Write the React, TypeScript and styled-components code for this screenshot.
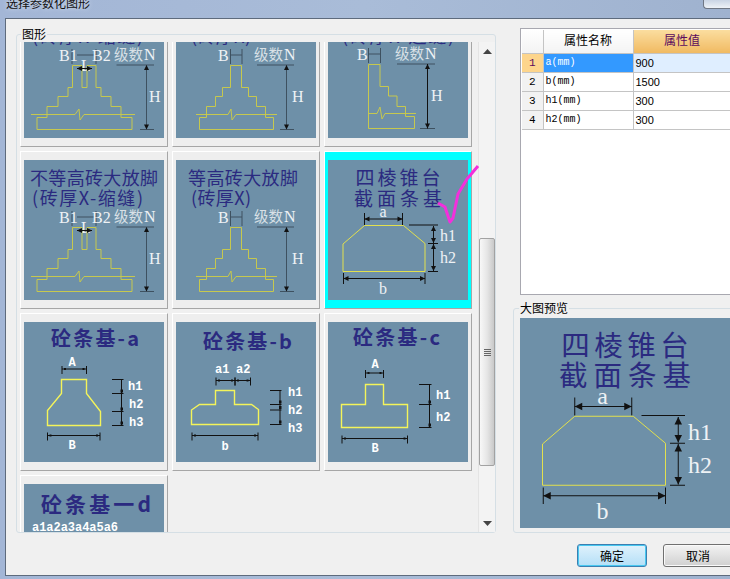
import React from 'react'
import styled, { createGlobalStyle } from 'styled-components'

const GlobalStyle = createGlobalStyle`
    html, body {
        margin: 0;
        padding: 0;
        width: 730px;
        height: 579px;
        overflow: hidden;
        font-family: "Noto Sans CJK SC", "Liberation Sans", sans-serif;
    }
`

const Frame = styled.div`
    width: 730px;
    height: 579px;
    overflow: hidden;
    background: linear-gradient(to right, #a3b6d6, #a9bcd8 50%, #9fb2cf);
`

const TitleBar = styled.div`
    height: 18px;
    display: flex;
    justify-content: space-between;
    align-items: flex-start;
    overflow: hidden;
`

const TitleText = styled.span`
    margin: -5px 0 0 6px;
    font-size: 12px;
    line-height: 16px;
    color: #111;
    text-shadow: 0 0 4px #dde6f2;
`

const CloseButton = styled.div`
    box-sizing: border-box;
    width: 27px;
    height: 9px;
    border: 1px solid #6f7784;
    border-top: 0;
    border-right: 0;
    border-radius: 0 0 0 4px;
    background: linear-gradient(#c9d4e4, #eef2f7);
`

const Client = styled.div`
    box-sizing: border-box;
    width: 760px;
    height: 558px;
    margin-left: 5px;
    border: 1px solid #5e6b7d;
    background: #f0f0f0;
`

const Body = styled.div`
    display: flex;
    height: 514px;
`

const ShapesGroup = styled.section`
    position: relative;
    box-sizing: border-box;
    flex: none;
    display: flex;
    width: 480px;
    height: 499px;
    margin: 15px 0 0 10px;
    padding-top: 7px;
    border: 1px solid #d5dfe5;
    border-radius: 3px;
`

const GroupLabel = styled.span<{ $left: number }>`
    position: absolute;
    top: -8px;
    left: ${p => p.$left}px;
    padding: 0 1px;
    font-size: 12px;
    line-height: 14px;
    color: #000;
    background: #f0f0f0;
`

const Viewport = styled.div`
    flex: none;
    width: 461px;
    height: 490px;
    overflow: hidden;
`

const ShapeGrid = styled.div`
    display: grid;
    grid-template-columns: repeat(3, 148px);
    grid-auto-rows: 158px;
    gap: 4px;
    margin-top: -53px;
    padding-left: 3px;
`

const Cell = styled.div<{ $selected?: boolean }>`
    box-sizing: border-box;
    padding: 8px 3px;
    border: 1px solid;
    border-color: #fff #a6a6a6 #a6a6a6 #fff;
    background: ${p => (p.$selected ? '#00ffff' : '#eeeeee')};
`

const Scrollbar = styled.div`
    flex: none;
    box-sizing: border-box;
    display: flex;
    flex-direction: column;
    width: 17px;
    height: 490px;
    border-left: 1px solid #e4e4e4;
    background: #f3f3f3;
`

const ScrollButton = styled.div`
    flex: none;
    display: flex;
    justify-content: center;
    align-items: center;
    height: 18px;
`

const ScrollThumb = styled.div`
    flex: none;
    box-sizing: border-box;
    display: flex;
    justify-content: center;
    align-items: center;
    height: 228px;
    margin-top: 178px;
    border: 1px solid #a2a2a2;
    border-radius: 2px;
    background: linear-gradient(to right, #f8f8f8, #e6e6e6 50%, #c9c9c9);
`

const ScrollSpacer = styled.div`
    flex: 1;
`

const Grip = styled.div`
    width: 7px;
    height: 7px;
    background: repeating-linear-gradient(#666 0 1px, transparent 1px 2px);
`

const CheckMark = styled.svg`
    position: absolute;
    left: 420px;
    top: 129px;
    width: 44px;
    height: 62px;
`

const SideColumn = styled.div`
    flex: none;
    width: 230px;
    margin-left: 17px;
    padding-top: 9px;
`

const TableBox = styled.div`
    box-sizing: border-box;
    height: 267px;
    margin-left: 7px;
    padding: 1px 0 0 1px;
    border: 1px solid #a8a8b0;
    background: #fff;
`

const PropTable = styled.table`
    table-layout: fixed;
    width: 209px;
    border-collapse: collapse;
`

const HeadCell = styled.th<{ $active?: boolean }>`
    height: 23px;
    padding: 0 0 3px;
    box-sizing: border-box;
    border-right: 1px solid #c4c4c4;
    border-bottom: 1px solid #c4c4c4;
    font-size: 12px;
    font-weight: 400;
    color: ${p => (p.$active ? '#5a0a5e' : '#000')};
    background: ${p => (p.$active ? 'linear-gradient(#fbdd9f, #f0ba62)' : 'linear-gradient(#fff, #f3f3f3)')};
`

const RowHead = styled.td<{ $active?: boolean }>`
    height: 18px;
    padding: 0;
    border-right: 1px solid #c4c4c4;
    border-bottom: 1px solid #c4c4c4;
    font-family: "Liberation Mono", monospace;
    font-size: 11px;
    line-height: 14px;
    text-align: center;
    color: ${p => (p.$active ? '#5a0a5e' : '#000')};
    background: ${p => (p.$active ? '#fdd58c' : '#f2f2f2')};
`

const NameCell = styled.td<{ $active?: boolean }>`
    padding: 0 0 0 2px;
    border-right: 1px solid #c4c4c4;
    border-bottom: 1px solid #c4c4c4;
    font-family: "Liberation Mono", monospace;
    font-size: 10px;
    line-height: 14px;
    color: ${p => (p.$active ? '#fff' : '#000')};
    background: ${p => (p.$active ? '#3399ff' : '#fff')};
`

const ValueCell = styled.td<{ $active?: boolean }>`
    padding: 0 0 0 2px;
    border-bottom: 1px solid #c4c4c4;
    font-family: "Liberation Sans", sans-serif;
    font-size: 11px;
    line-height: 14px;
    color: #000;
    background: ${p => (p.$active ? '#dfeeff' : '#fff')};
`

const PreviewGroup = styled.section`
    position: relative;
    box-sizing: border-box;
    height: 225px;
    margin-top: 13px;
    padding: 9px 0 0 6px;
    border: 1px solid #d5dfe5;
    border-radius: 3px;
`

const Footer = styled.div`
    display: flex;
    gap: 16px;
    margin-top: 11px;
    padding-left: 571px;
`

const DialogButton = styled.button<{ $primary?: boolean }>`
    box-sizing: border-box;
    width: 70px;
    height: 23px;
    padding: 0;
    border: 1px solid ${p => (p.$primary ? '#3c7fb1' : '#707070')};
    border-radius: 3px;
    font-family: inherit;
    font-size: 12px;
    color: #000;
    background: ${p => (p.$primary ? 'linear-gradient(#e0f2fc, #b4dff7)' : 'linear-gradient(#f3f3f3, #d0d0d0)')};
    box-shadow: ${p => (p.$primary ? 'inset 0 0 0 1px #48c8f0' : 'inset 0 0 0 1px #fafafa')};
`

// drawings
const Plate = styled.svg<{ $size: number }>`
    display: block;
    flex: none;
    width: ${p => p.$size}px;
    height: ${p => p.$size}px;
    background: #6e90a8;
`

const Heading = styled.text<{ $bold?: boolean; $size?: number }>`
    font-family: "Noto Sans CJK SC", sans-serif;
    font-size: ${p => p.$size ?? 18}px;
    font-weight: ${p => (p.$bold ? 700 : 400)};
    fill: #2b2a80;
`

const SerifMark = styled.text`
    font-family: "Liberation Serif", serif;
    font-size: 16px;
    fill: #eef2f5;
`

const CjkMark = styled.text`
    font-family: "Noto Sans CJK SC", sans-serif;
    font-size: 14.5px;
    fill: #d8e0e6;
`

const BoldMark = styled.text`
    font-family: "Liberation Mono", monospace;
    font-size: 12px;
    font-weight: 700;
    fill: #fff;
`

const Outline = styled.polygon<{ $tone?: 'brick' | 'taper' | 'concrete' }>`
    fill: none;
    stroke: ${p => (p.$tone === 'concrete' ? '#f4f45a' : p.$tone === 'taper' ? '#e2e04e' : '#c6c84e')};
    stroke-width: ${p => (p.$tone === 'concrete' ? 1.4 : 1)};
    vector-effect: non-scaling-stroke;
`

const Ground = styled.polyline`
    fill: none;
    stroke: #c6c84e;
    stroke-width: 1;
    vector-effect: non-scaling-stroke;
`

const Rule = styled.line<{ $soft?: boolean }>`
    stroke: ${p => (p.$soft ? '#3e5160' : '#111')};
    stroke-width: 1;
    vector-effect: non-scaling-stroke;
`

const VDim = ({ x, y1, y2, soft }: { x: number; y1: number; y2: number; soft?: boolean }) => (
    <g>
        <Rule $soft={soft} x1={x} y1={y1} x2={x} y2={y2} />
        <polygon points={`${x},${y1} ${x - 2.5},${y1 + 5} ${x + 2.5},${y1 + 5}`} fill="#111" />
        <polygon points={`${x},${y2} ${x - 2.5},${y2 - 5} ${x + 2.5},${y2 - 5}`} fill="#111" />
    </g>
)

const HDim = ({ y, x1, x2 }: { y: number; x1: number; x2: number }) => (
    <g>
        <Rule x1={x1} y1={y} x2={x2} y2={y} />
        <polygon points={`${x1},${y} ${x1 + 5},${y - 2.5} ${x1 + 5},${y + 2.5}`} fill="#111" />
        <polygon points={`${x2},${y} ${x2 - 5},${y - 2.5} ${x2 - 5},${y + 2.5}`} fill="#111" />
    </g>
)

const SmallHDim = ({ y, x1, x2 }: { y: number; x1: number; x2: number }) => (
    <g>
        <Rule x1={x1} y1={y - 3} x2={x1} y2={y + 5} />
        <Rule x1={x2} y1={y - 3} x2={x2} y2={y + 5} />
        <Rule x1={x1} y1={y} x2={x2} y2={y} />
        <rect x={x1 + 2} y={y - 1} width={2} height={2} fill="#111" />
        <rect x={x2 - 4} y={y - 1} width={2} height={2} fill="#111" />
    </g>
)

const TickStack = ({ x1, x2, stem, ys }: { x1: number; x2: number; stem: number; ys: number[] }) => (
    <g>
        {ys.map(y => (
            <Rule key={y} x1={x1} y1={y} x2={x2} y2={y} />
        ))}
        <Rule x1={stem} y1={ys[0]} x2={stem} y2={ys[ys.length - 1]} />
        {ys.slice(1).map(y => (
            <rect key={y} x={stem - 1} y={y - 4} width={2.5} height={3} fill="#111" />
        ))}
    </g>
)

const BrickUnequal = () => (
    <>
        <Heading x={6} y={24.5} textLength={128}>不等高砖大放脚</Heading>
        <Heading x={8} y={45} textLength={111}>(砖厚X-缩缝)</Heading>
        <Rule $soft x1={48} y1={51} x2={48} y2={66} />
        <Rule $soft x1={72} y1={51} x2={72} y2={66} />
        <Rule $soft x1={53} y1={57} x2={72} y2={57} />
        <SerifMark x={35} y={63}>B1</SerifMark>
        <SerifMark x={68} y={63}>B2</SerifMark>
        <CjkMark x={90} y={62}>级数</CjkMark>
        <SerifMark x={120} y={62}>N</SerifMark>
        <SerifMark x={57} y={73}>L</SerifMark>
        <Outline points="48.5,67.5 58,67.5 58,89.5 63,89.5 63,67.5 72,67.5 72,89.5 77,89.5 77,98.5 87,98.5 87,108.5 97,108.5 97,119.5 108,119.5 108,131.5 13,131.5 13,119.5 23,119.5 23,108.5 34,108.5 34,98.5 44,98.5 44,89.5 48.5,89.5" />
        <Ground points="7,116.5 51,116.5 55,111 56,122 60,116.5 111,116.5" />
        <HDim y={70.5} x1={53} x2={68} />
        <Rule $soft x1={92.5} y1={67} x2={130} y2={67} />
        <Rule $soft x1={116} y1={131.5} x2={130} y2={131.5} />
        <VDim soft x={122.5} y1={67} y2={131.5} />
        <SerifMark x={125} y={104}>H</SerifMark>
    </>
)

const BrickEqual = () => (
    <>
        <Heading x={12} y={24.5} textLength={110}>等高砖大放脚</Heading>
        <Heading x={15} y={45} textLength={60}>(砖厚X)</Heading>
        <Rule $soft x1={54.5} y1={51} x2={54.5} y2={66} />
        <Rule $soft x1={66} y1={51} x2={66} y2={66} />
        <Rule $soft x1={54.5} y1={57} x2={66} y2={57} />
        <SerifMark x={42} y={63}>B</SerifMark>
        <CjkMark x={78} y={62}>级数</CjkMark>
        <SerifMark x={108} y={62}>N</SerifMark>
        <Outline points="54.5,67.5 65.5,67.5 65.5,89.5 72.5,89.5 72.5,98.5 80.5,98.5 80.5,108.5 89.5,108.5 89.5,119.5 97.5,119.5 97.5,131.5 23.5,131.5 23.5,119.5 30.5,119.5 30.5,108.5 39.5,108.5 39.5,98.5 46.5,98.5 46.5,89.5 54.5,89.5" />
        <Ground points="20,116.5 52,116.5 55,111 56,122 60,116.5 101,116.5" />
        <Rule $soft x1={81} y1={67} x2={118} y2={67} />
        <Rule $soft x1={104} y1={131.5} x2={118} y2={131.5} />
        <VDim soft x={110.5} y1={67} y2={131.5} />
        <SerifMark x={116} y={104}>H</SerifMark>
    </>
)

const BrickSide = () => (
    <>
        <Heading x={16} y={24.5} textLength={108}>等高砖大放脚</Heading>
        <Heading x={14} y={45} textLength={112}>(砖厚X-边缝)</Heading>
        <Rule $soft x1={40.5} y1={50} x2={40.5} y2={65} />
        <Rule $soft x1={52.5} y1={50} x2={52.5} y2={65} />
        <Rule $soft x1={40.5} y1={56} x2={52.5} y2={56} />
        <SerifMark x={29} y={62}>B</SerifMark>
        <CjkMark x={67} y={61}>级数</CjkMark>
        <SerifMark x={97} y={61}>N</SerifMark>
        <Outline points="40.5,66.5 52,66.5 52,88.5 60.5,88.5 60.5,98 69,98 69,108.5 77.5,108.5 77.5,118.5 86.5,118.5 86.5,130.5 40.5,130.5" />
        <Ground points="40.5,115.5 49,115.5 52,109 54,121 57,115.5 88,115.5" />
        <Rule $soft x1={69} y1={66} x2={107} y2={66} />
        <Rule $soft x1={92} y1={130.5} x2={107} y2={130.5} />
        <VDim x={99.5} y1={66} y2={130.5} />
        <SerifMark x={103} y={103}>H</SerifMark>
    </>
)

const Taper = () => (
    <>
        <Heading $size={19} x={27.5} y={25} textLength={85}>四棱锥台</Heading>
        <Heading $size={19} x={26} y={45.5} textLength={88}>截面条基</Heading>
        <SerifMark x={55} y={57} textAnchor="middle">a</SerifMark>
        <Rule x1={36.5} y1={53} x2={36.5} y2={65} />
        <Rule x1={74.5} y1={53} x2={74.5} y2={65} />
        <HDim y={59} x1={36.5} x2={74.5} />
        <Outline $tone="taper" points="36.5,65.5 75.5,65.5 97,83.5 97,111.5 15,111.5 15,84" />
        <Rule x1={81} y1={65} x2={110} y2={65} />
        <Rule x1={100} y1={83.5} x2={110} y2={83.5} />
        <Rule x1={100} y1={111.5} x2={110} y2={111.5} />
        <VDim x={105.5} y1={66} y2={83} />
        <VDim x={105.5} y1={84} y2={111} />
        <SerifMark x={112} y={81}>h1</SerifMark>
        <SerifMark x={112} y={103}>h2</SerifMark>
        <Rule x1={15.5} y1={113} x2={15.5} y2={124} />
        <Rule x1={97} y1={113} x2={97} y2={124} />
        <HDim y={118.5} x1={15.5} x2={97} />
        <SerifMark x={55} y={134} textAnchor="middle">b</SerifMark>
    </>
)

const ConcreteA = () => (
    <>
        <Heading $bold $size={20} x={27} y={24} textLength={88}>砼条基-a</Heading>
        <BoldMark x={48} y={44} textAnchor="middle">A</BoldMark>
        <SmallHDim y={47} x1={38} x2={62.5} />
        <Outline $tone="concrete" points="37.5,57.5 62.5,57.5 62.5,71.5 76.5,89.5 76.5,103.5 23.5,103.5 23.5,88.5 37.5,71.5" />
        <TickStack x1={88} x2={99.5} stem={97.5} ys={[57.5, 71.5, 89.5, 103.5]} />
        <BoldMark x={104} y={68}>h1</BoldMark>
        <BoldMark x={105} y={86}>h2</BoldMark>
        <BoldMark x={105} y={104}>h3</BoldMark>
        <SmallHDim y={113.5} x1={23.5} x2={76} />
        <BoldMark x={48} y={127} textAnchor="middle">B</BoldMark>
    </>
)

const ConcreteB = () => (
    <>
        <Heading $bold $size={20} x={27} y={27} textLength={89}>砼条基-b</Heading>
        <BoldMark x={39} y={51}>a1</BoldMark>
        <BoldMark x={60} y={51}>a2</BoldMark>
        <SmallHDim y={58.5} x1={40} x2={59} />
        <SmallHDim y={58.5} x1={59} x2={74.5} />
        <Outline $tone="concrete" points="39.5,68.5 58.5,68.5 58.5,82.5 75.5,82.5 82.5,87.5 82.5,102.5 15.5,102.5 15.5,88 23.5,82.5 39.5,82.5" />
        <TickStack x1={94} x2={105.5} stem={104} ys={[68.5, 82.5, 88, 102.5]} />
        <BoldMark x={112} y={74}>h1</BoldMark>
        <BoldMark x={112} y={92}>h2</BoldMark>
        <BoldMark x={112} y={110}>h3</BoldMark>
        <SmallHDim y={113.5} x1={16} x2={82} />
        <BoldMark x={49} y={128} textAnchor="middle">b</BoldMark>
    </>
)

const ConcreteC = () => (
    <>
        <Heading $bold $size={20} x={25} y={23} textLength={87}>砼条基-c</Heading>
        <BoldMark x={47} y={46} textAnchor="middle">A</BoldMark>
        <SmallHDim y={51} x1={37.5} x2={55.5} />
        <Outline $tone="concrete" points="37.5,62.5 55.5,62.5 55.5,82.5 79.5,82.5 79.5,105.5 13.5,105.5 13.5,82.5 37.5,82.5" />
        <TickStack x1={91} x2={103.5} stem={101.5} ys={[62.5, 82.5, 105.5]} />
        <BoldMark x={108} y={77}>h1</BoldMark>
        <BoldMark x={108} y={99}>h2</BoldMark>
        <SmallHDim y={116.5} x1={14} x2={79.5} />
        <BoldMark x={47} y={130} textAnchor="middle">B</BoldMark>
    </>
)

const ConcreteD = () => (
    <>
        <Heading $bold $size={21} x={17} y={28} textLength={110}>砼条基一d</Heading>
        <BoldMark x={8} y={47} textLength={86}>a1a2a3a4a5a6</BoldMark>
    </>
)

const shapes: { id: string; art: React.ReactNode; selected?: boolean }[] = [
    { id: 'brick-a', art: <BrickUnequal /> },
    { id: 'brick-b', art: <BrickEqual /> },
    { id: 'brick-c', art: <BrickSide /> },
    { id: 'brick-d', art: <BrickUnequal /> },
    { id: 'brick-e', art: <BrickEqual /> },
    { id: 'taper', art: <Taper />, selected: true },
    { id: 'con-a', art: <ConcreteA /> },
    { id: 'con-b', art: <ConcreteB /> },
    { id: 'con-c', art: <ConcreteC /> },
    { id: 'con-d', art: <ConcreteD /> },
]

const rows = [
    { no: 1, name: 'a(mm)', value: '900' },
    { no: 2, name: 'b(mm)', value: '1500' },
    { no: 3, name: 'h1(mm)', value: '300' },
    { no: 4, name: 'h2(mm)', value: '300' },
]

const App = () => (
    <Frame>
        <GlobalStyle />
        <TitleBar>
            <TitleText>选择参数化图形</TitleText>
            <CloseButton />
        </TitleBar>
        <Client>
            <Body>
                <ShapesGroup>
                    <GroupLabel $left={4}>图形</GroupLabel>
                    <Viewport>
                        <ShapeGrid>
                            {shapes.map(s => (
                                <Cell key={s.id} $selected={s.selected}>
                                    <Plate $size={140} viewBox="0 0 140 140">{s.art}</Plate>
                                </Cell>
                            ))}
                        </ShapeGrid>
                    </Viewport>
                    <Scrollbar>
                        <ScrollButton>
                            <svg width="9" height="5" viewBox="0 0 9 5"><path d="M4.5 0 9 5H0z" fill="#444" /></svg>
                        </ScrollButton>
                        <ScrollThumb><Grip /></ScrollThumb>
                        <ScrollSpacer />
                        <ScrollButton>
                            <svg width="9" height="5" viewBox="0 0 9 5"><path d="M4.5 5 9 0H0z" fill="#444" /></svg>
                        </ScrollButton>
                    </Scrollbar>
                    <CheckMark viewBox="0 0 44 62">
                        <polyline
                            points="1,39 8,43 13,58 16,54 21,30 30,15 41,2"
                            fill="none"
                            stroke="#f32fdc"
                            strokeWidth="3"
                            strokeLinejoin="round"
                        />
                    </CheckMark>
                </ShapesGroup>
                <SideColumn>
                    <TableBox>
                        <PropTable>
                            <colgroup>
                                <col width="21" />
                                <col width="90" />
                                <col width="98" />
                            </colgroup>
                            <thead>
                                <tr>
                                    <HeadCell />
                                    <HeadCell>属性名称</HeadCell>
                                    <HeadCell $active>属性值</HeadCell>
                                </tr>
                            </thead>
                            <tbody>
                                {rows.map(r => (
                                    <tr key={r.no}>
                                        <RowHead $active={r.no === 1}>{r.no}</RowHead>
                                        <NameCell $active={r.no === 1}>{r.name}</NameCell>
                                        <ValueCell $active={r.no === 1}>{r.value}</ValueCell>
                                    </tr>
                                ))}
                            </tbody>
                        </PropTable>
                    </TableBox>
                    <PreviewGroup>
                        <GroupLabel $left={5}>大图预览</GroupLabel>
                        <Plate $size={210} viewBox="0 0 140 140"><Taper /></Plate>
                    </PreviewGroup>
                </SideColumn>
            </Body>
            <Footer>
                <DialogButton $primary>确定</DialogButton>
                <DialogButton>取消</DialogButton>
            </Footer>
        </Client>
    </Frame>
)

export default App
